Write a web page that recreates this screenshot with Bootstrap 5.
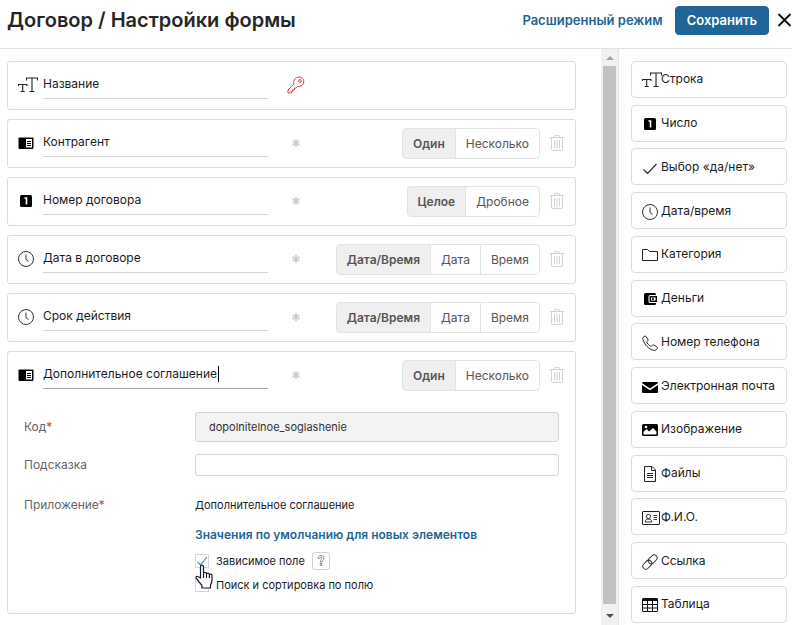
<!DOCTYPE html>
<html lang="ru">
<head>
<meta charset="utf-8">
<meta name="viewport" content="width=device-width, initial-scale=1">
<title>Договор / Настройки формы</title>
<link href="https://cdn.jsdelivr.net/npm/bootstrap@5.3.0/dist/css/bootstrap.min.css" rel="stylesheet">
<style>
  body { font-family: Inter, "Liberation Sans", sans-serif; font-size: 12px; line-height: 18px; color: #1c1c1c; background: #fff; }
  .topbar { height: 49px; border-bottom: 1px solid #e2e2e2; padding: 0 0 7px 7px; }
  .topbar h1 { font-size: 20px; line-height: 26px; font-weight: 600; color: #262626; }
  .accent-link { color: #1f6598; font-weight: 600; text-decoration: none; }
  .topbar .accent-link { font-size: 13px; }
  .btn-save { --bs-btn-color: #fff; --bs-btn-bg: #1f6598; --bs-btn-border-color: #1f6598; --bs-btn-hover-color: #fff; --bs-btn-hover-bg: #195680; --bs-btn-padding-x: 11px; --bs-btn-padding-y: 4px; --bs-btn-font-size: 13px; --bs-btn-line-height: 19px; --bs-btn-font-weight: 600; --bs-btn-border-radius: 4px; }
  .icon-btn { border: 0; background: none; padding: 0; line-height: 0; }
  .fields { padding: 12px 25px 12px 7px; gap: 9px; }
  .field-card { border: 1px solid #dcdcdc; border-radius: 3px; }
  .field-head { padding: 8px 11px 8px 10px; min-height: 47px; }
  .type-icon { width: 25px; flex: none; line-height: 0; }
  .name-box { width: 225px; }
  .name-input { display: block; border: 0; border-bottom: 1px solid #d4d4d4; padding: 0 0 2px; height: 28px; width: 100%; color: #1c1c1c; background: none; outline: 0; }
  .name-input.current { border-color: #a4a4a4; }
  .caret { position: absolute; left: 175px; top: 5px; width: 1px; height: 16px; background: #000; }
  .flag { width: 24px; margin-left: 16px; line-height: 0; }
  .seg .btn { --bs-btn-color: #555; --bs-btn-bg: #fff; --bs-btn-border-color: #e3e3e3; --bs-btn-active-color: #555; --bs-btn-active-bg: #efefef; --bs-btn-active-border-color: #e3e3e3; --bs-btn-padding-x: 10px; --bs-btn-padding-y: 5px; --bs-btn-font-size: 12px; --bs-btn-line-height: 19px; --bs-btn-border-radius: 4px; }
  .seg .btn.active { font-weight: 600; }
  .trash { margin-left: 10px; color: #d2d2d2; }
  .details { display: grid; grid-template-columns: 171px 1fr; padding: 13px 16px 19px; row-gap: 12px; align-items: center; }
  .details .caption { color: #666; }
  .details .caption span { color: #e53935; }
  .details .form-control, .details .small-text { font-size: 11px; line-height: 18px; }
  .details .form-control { border-color: #d3d5da; border-radius: 3px; padding: 1px 13px; color: #333; }
  .details .code-input { background: #f3f3f3; padding: 5px 13px; }
  .options { grid-column: 2; }
  .tick { appearance: none; width: 14px; height: 14px; margin: 0 7px 0 0; border: 1px solid #d3d5da; background: #fff center / 12px 12px no-repeat; }
  .tick:checked { background-image: url("data:image/svg+xml,%3Csvg xmlns='http://www.w3.org/2000/svg' viewBox='0 0 12 12'%3E%3Cpath d='M1.5 7l3 3L11 2' fill='none' stroke='%233a86c8' stroke-width='1.1'/%3E%3C/svg%3E"); }
  .option-rows { gap: 6px; }
  .hint-btn { width: 18px; height: 18px; border: 1px solid #d0d0d0; border-radius: 3px; background: #fff; padding: 0; line-height: 0; margin-left: 7px; }
  .pointer { position: absolute; left: 0; top: 12px; }
  .rail { width: 18px; background: #f1f1f1; border-right: 1px solid #e2e2e2; padding: 7px 2px; gap: 6px; }
  .rail-thumb { background: #c1c1c1; width: 13px; }
  .palette { width: 173px; padding: 12px 5px 2px 12px; }
  .palette-item { height: 37px; border: 1px solid #dcdcdc; border-radius: 4px; background: #fff; padding: 0 0 0 10px; color: #1c1c1c; text-align: left; }
  .palette-item .type-icon { width: 19px; padding-top: 2px; }
  svg { overflow: visible; }
</style>
<script src="https://cdn.jsdelivr.net/npm/bootstrap@5.3.0/dist/js/bootstrap.bundle.min.js"></script>
</head>
<body class="vh-100 d-flex flex-column overflow-hidden">
<svg class="d-none" aria-hidden="true">
  <symbol id="i-text" viewBox="0 0 20 16"><path d="M8.500 3.500V1H19.500V3.500M14 1V14.500M11.500 14.500H16.500M.5 9V7.500H9V9M4.700 7.500V14.500M2.700 14.500H6.700" fill="none" stroke="#222" stroke-width="1.100"/></symbol>
  <symbol id="i-app" viewBox="0 0 16 16"><rect x=".5" y="2.500" width="15" height="11.500" rx="1" fill="#000"/><path d="M8 4h6v8.500H8z" fill="#fff"/><path d="M9 6.500h4M9 8.500h4M9 10.500h4" stroke="#000"/></symbol>
  <symbol id="i-num" viewBox="0 0 16 16"><rect x="2" y="2" width="12" height="12" rx="1.500" fill="#000"/><path d="M6.500 5h2v6.500" fill="none" stroke="#fff" stroke-width="1.600"/></symbol>
  <symbol id="i-clock" viewBox="0 0 16 16"><circle cx="8" cy="8" r="7.500" fill="none" stroke="#333"/><path d="M8 3.500V8.500L10.500 10.500" fill="none" stroke="#333"/></symbol>
  <symbol id="i-check" viewBox="0 0 16 16"><path d="M1.500 9.500l4 4L14.500 4" fill="none" stroke="#222" stroke-width="1.100"/></symbol>
  <symbol id="i-folder" viewBox="0 0 16 16"><path d="M.5 13.500v-11h5l2 2h8v9z" fill="none" stroke="#222" stroke-linejoin="round"/></symbol>
  <symbol id="i-money" viewBox="0 0 16 16"><path d="M3.500 2H12.500a1.500 1.500 0 0 1 1.500 1.500V4H8a1.500 1.500 0 0 0-1.500 1.500v5A1.500 1.500 0 0 0 8 12h6v.5a1.500 1.500 0 0 1-1.500 1.500H3.500A1.500 1.500 0 0 1 2 12.500v-9A1.500 1.500 0 0 1 3.500 2z"/><path d="M8.300 5.700h6v4.600h-6z" fill="none" stroke="#000" stroke-width="1.400"/><circle cx="11" cy="8" r="1"/></symbol>
  <symbol id="i-phone" viewBox="0 0 16 16"><path d="M3.600 1.200l2.300 2.900c.4.500.3 1-.1 1.500l-.9 1.100c-.2.400-.1.700.1 1.100 1 1.500 2 2.500 3.500 3.400.4.200.8.200 1.100-.1l1-.9c.4-.4.9-.4 1.400-.1l3 2c.6.400.6.900.2 1.400l-1.200 1.300c-.7.700-1.600.8-2.600.5C6.500 13.900 2.700 9.900 1 4.700.6 3.500.8 2.800 1.500 2.100l.9-1c.4-.4.9-.3 1.200.1z" fill="none" stroke="#222"/></symbol>
  <symbol id="i-mail" viewBox="0 0 16 16"><path d="M0 4a1 1 0 0 1 1-1h14a1 1 0 0 1 1 1L8 9.500zM0 6l8 5.300L16 6v7a1 1 0 0 1-1 1H1a1 1 0 0 1-1-1z"/></symbol>
  <symbol id="i-image" viewBox="0 0 16 16"><rect y="2" width="16" height="12" rx="1.500"/><path d="M1.500 12.500V10l3-3 2.500 2.500L11 6l3.500 3.500v3z" fill="#fff"/><circle cx="4" cy="5" r="1.300" fill="#fff"/></symbol>
  <symbol id="i-file" viewBox="0 0 16 16"><path d="M2.500.5h7.500l3.500 3.500v11.500h-11zM9.500.5v4h4M5 7.500h6M5 9.500h6M5 11.500h6" fill="none" stroke="#222" stroke-linejoin="round"/></symbol>
  <symbol id="i-person" viewBox="0 0 18 16"><rect x=".5" y="1.500" width="17" height="13" rx=".5" fill="none" stroke="#222"/><circle cx="6.500" cy="6.500" r="2.100" fill="none" stroke="#222" stroke-width=".9"/><path d="M3.300 12c0-2 1.200-2.700 2-2.800h2.400c.9.100 2 .8 2 2.800zM11.500 5.500H15M11.500 7.500H15M11.500 9.500H15" fill="none" stroke="#222" stroke-width=".9"/></symbol>
  <symbol id="i-link" viewBox="0 0 16 16"><g fill="none" stroke="#333"><rect x="-5" y="-3" width="10" height="6" rx="3" transform="translate(10.700 5.300) rotate(-45)"/><rect x="-5" y="-3" width="10" height="6" rx="3" transform="translate(5.300 10.700) rotate(-45)"/></g></symbol>
  <symbol id="i-table" viewBox="0 0 16 16"><rect x=".5" y="1.500" width="15" height="13" rx=".5" fill="none" stroke="#111"/><path d="M0 3h16" stroke="#111" stroke-width="2"/><path d="M0 7.500h16M0 11h16M5.500 3v11M10.500 3v11" stroke="#111"/></symbol>
  <symbol id="i-star" viewBox="0 0 8 8"><path d="M4 0v8M.5 2l7 4M.5 6l7-4" stroke="#d0d0d0" stroke-width="2"/></symbol>
  <symbol id="i-trash" viewBox="0 0 14 16"><path d="M0 2.500h14M4.500 2.500V1.200c0-.4.300-.7.700-.7h3.600c.4 0 .7.300.7.700v1.300M1.500 2.500v12c0 .6.400 1 1 1h9c.6 0 1-.4 1-1v-12M4.500 5v8.500M7 5v8.500M9.500 5v8.500" fill="none" stroke="currentColor"/></symbol>
</svg>

<header class="topbar d-flex align-items-center">
  <h1 class="m-0 me-auto">Договор / Настройки формы</h1>
  <a href="#" class="accent-link me-2 pe-1">Расширенный режим</a>
  <button type="button" class="btn btn-save">Сохранить</button>
  <button type="button" class="icon-btn ms-2" aria-label="Закрыть"><svg width="15" height="14" viewBox="0 0 15 14"><path d="M1.500 1l12 12M13.500 1l-12 12" stroke="#111" stroke-width="1.800"/></svg></button>
</header>

<div class="d-flex flex-grow-1" style="min-height:0">
  <main class="fields d-flex flex-column flex-grow-1">
    <section class="field-card">
      <div class="field-head d-flex align-items-center">
        <span class="type-icon"><svg width="20" height="16"><use href="#i-text"/></svg></span>
        <div class="name-box"><input class="name-input" aria-label="Название поля" value="Название"></div>
        <div class="flag text-center"><svg width="18" height="18" viewBox="0 0 18 18"><path d="M7 8.200C6 4 8.500 1 12 1s5.500 3 4.500 6c-.8 2.700-3.500 4-6 3.500L9 12H7.500v1.800H5.700v1.700H4.500V17H1v-3z" fill="none" stroke="#e53935"/><circle cx="13" cy="5" r="1.400" fill="none" stroke="#e53935" stroke-width=".9"/></svg></div>
      </div>
    </section>
    <section class="field-card">
      <div class="field-head d-flex align-items-center">
        <span class="type-icon"><svg width="16" height="16"><use href="#i-app"/></svg></span>
        <div class="name-box"><input class="name-input" aria-label="Название поля" value="Контрагент"></div>
        <div class="flag text-center"><svg width="8" height="8"><use href="#i-star"/></svg></div>
        <div class="btn-group seg ms-auto"><button type="button" class="btn active">Один</button><button type="button" class="btn">Несколько</button></div>
        <button type="button" class="icon-btn trash" aria-label="Удалить"><svg width="14" height="16"><use href="#i-trash"/></svg></button>
      </div>
    </section>
    <section class="field-card">
      <div class="field-head d-flex align-items-center">
        <span class="type-icon"><svg width="16" height="16"><use href="#i-num"/></svg></span>
        <div class="name-box"><input class="name-input" aria-label="Название поля" value="Номер договора"></div>
        <div class="flag text-center"><svg width="8" height="8"><use href="#i-star"/></svg></div>
        <div class="btn-group seg ms-auto"><button type="button" class="btn active">Целое</button><button type="button" class="btn">Дробное</button></div>
        <button type="button" class="icon-btn trash" aria-label="Удалить"><svg width="14" height="16"><use href="#i-trash"/></svg></button>
      </div>
    </section>
    <section class="field-card">
      <div class="field-head d-flex align-items-center">
        <span class="type-icon"><svg width="16" height="16"><use href="#i-clock"/></svg></span>
        <div class="name-box"><input class="name-input" aria-label="Название поля" value="Дата в договоре"></div>
        <div class="flag text-center"><svg width="8" height="8"><use href="#i-star"/></svg></div>
        <div class="btn-group seg ms-auto"><button type="button" class="btn active">Дата/Время</button><button type="button" class="btn">Дата</button><button type="button" class="btn">Время</button></div>
        <button type="button" class="icon-btn trash" aria-label="Удалить"><svg width="14" height="16"><use href="#i-trash"/></svg></button>
      </div>
    </section>
    <section class="field-card">
      <div class="field-head d-flex align-items-center">
        <span class="type-icon"><svg width="16" height="16"><use href="#i-clock"/></svg></span>
        <div class="name-box"><input class="name-input" aria-label="Название поля" value="Срок действия"></div>
        <div class="flag text-center"><svg width="8" height="8"><use href="#i-star"/></svg></div>
        <div class="btn-group seg ms-auto"><button type="button" class="btn active">Дата/Время</button><button type="button" class="btn">Дата</button><button type="button" class="btn">Время</button></div>
        <button type="button" class="icon-btn trash" aria-label="Удалить"><svg width="14" height="16"><use href="#i-trash"/></svg></button>
      </div>
    </section>
    <section class="field-card">
      <div class="field-head d-flex align-items-center">
        <span class="type-icon"><svg width="16" height="16"><use href="#i-app"/></svg></span>
        <div class="name-box position-relative"><input class="name-input current" aria-label="Название поля" value="Дополнительное соглашение"><span class="caret"></span></div>
        <div class="flag text-center"><svg width="8" height="8"><use href="#i-star"/></svg></div>
        <div class="btn-group seg ms-auto"><button type="button" class="btn active">Один</button><button type="button" class="btn">Несколько</button></div>
        <button type="button" class="icon-btn trash" aria-label="Удалить"><svg width="14" height="16"><use href="#i-trash"/></svg></button>
      </div>
      <div class="details">
        <label class="caption" for="code">Код<span>*</span></label>
        <input id="code" class="form-control code-input" value="dopolnitelnoe_soglashenie" readonly>
        <label class="caption" for="tip">Подсказка</label>
        <input id="tip" class="form-control">
        <div class="caption pt-2">Приложение<span>*</span></div>
        <div class="small-text pt-2">Дополнительное соглашение</div>
        <div class="options">
          <a href="#" class="accent-link d-block mb-2">Значения по умолчанию для новых элементов</a>
          <div class="option-rows small-text d-flex flex-column position-relative">
            <div class="d-flex align-items-center"><input class="tick" type="checkbox" id="dep" checked><label for="dep">Зависимое поле</label><button type="button" class="hint-btn" aria-label="Справка"><svg width="8" height="11" viewBox="0 0 8 11"><path d="M1 3.500C1 1.500 2.300.5 4 .5s3 1 3 2.500c0 1.800-2 2-2 4H3.200c0-2.500 2-2.700 2-4C5.200 1.800 2.800 1.800 2.800 3.500zM3.200 8.500H5v1.800H3.200z" fill="none" stroke="#777" stroke-width=".8"/></svg></button></div>
            <div class="d-flex align-items-center"><input class="tick" type="checkbox" id="srch"><label for="srch">Поиск и сортировка по полю</label></div>
            <svg class="pointer" width="18" height="25" viewBox="0 0 18 25"><path d="M5.500 14V3c0-2.400 3-2.400 3 0v6.500c.6-1.500 2.800-1.300 3 .3.700-1.200 2.700-1 2.900.7.900-.9 2.600-.4 2.600 1.200V16c0 2-.6 3.600-1.500 4.800V24H7v-2.500C5 19.500 3.500 17.500 1.200 14.200c-.9-1.500.9-2.600 2.200-1.400zM8.500 9.500V14M11.500 10v4M14.400 10.800V14" fill="#fff" stroke="#1a1a2a" stroke-width="1.200" stroke-linejoin="round"/></svg>
          </div>
        </div>
      </div>
    </section>
  </main>

  <div class="rail d-flex flex-column align-items-center" aria-hidden="true">
    <svg width="8" height="4" viewBox="0 0 8 4"><path d="M0 4l4-4 4 4z" fill="#a3a3a3"/></svg>
    <div class="rail-thumb flex-grow-1"></div>
    <svg class="mt-1" width="8" height="4" viewBox="0 0 8 4"><path d="M0 0l4 4 4-4z" fill="#505050"/></svg>
  </div>

  <aside class="palette d-flex flex-column justify-content-between">
    <button type="button" class="palette-item d-flex align-items-center"><span class="type-icon"><svg width="20" height="16"><use href="#i-text"/></svg></span>Строка</button>
    <button type="button" class="palette-item d-flex align-items-center"><span class="type-icon"><svg width="16" height="16"><use href="#i-num"/></svg></span>Число</button>
    <button type="button" class="palette-item d-flex align-items-center"><span class="type-icon"><svg width="16" height="16"><use href="#i-check"/></svg></span>Выбор «да/нет»</button>
    <button type="button" class="palette-item d-flex align-items-center"><span class="type-icon"><svg width="16" height="16"><use href="#i-clock"/></svg></span>Дата/время</button>
    <button type="button" class="palette-item d-flex align-items-center"><span class="type-icon"><svg width="16" height="16"><use href="#i-folder"/></svg></span>Категория</button>
    <button type="button" class="palette-item d-flex align-items-center"><span class="type-icon"><svg width="16" height="16"><use href="#i-money"/></svg></span>Деньги</button>
    <button type="button" class="palette-item d-flex align-items-center"><span class="type-icon"><svg width="16" height="16"><use href="#i-phone"/></svg></span>Номер телефона</button>
    <button type="button" class="palette-item d-flex align-items-center"><span class="type-icon"><svg width="16" height="16"><use href="#i-mail"/></svg></span>Электронная почта</button>
    <button type="button" class="palette-item d-flex align-items-center"><span class="type-icon"><svg width="16" height="16"><use href="#i-image"/></svg></span>Изображение</button>
    <button type="button" class="palette-item d-flex align-items-center"><span class="type-icon"><svg width="16" height="16"><use href="#i-file"/></svg></span>Файлы</button>
    <button type="button" class="palette-item d-flex align-items-center"><span class="type-icon"><svg width="18" height="16"><use href="#i-person"/></svg></span>Ф.И.О.</button>
    <button type="button" class="palette-item d-flex align-items-center"><span class="type-icon"><svg width="16" height="16"><use href="#i-link"/></svg></span>Ссылка</button>
    <button type="button" class="palette-item d-flex align-items-center"><span class="type-icon"><svg width="16" height="16"><use href="#i-table"/></svg></span>Таблица</button>
  </aside>
</div>
</body>
</html>
